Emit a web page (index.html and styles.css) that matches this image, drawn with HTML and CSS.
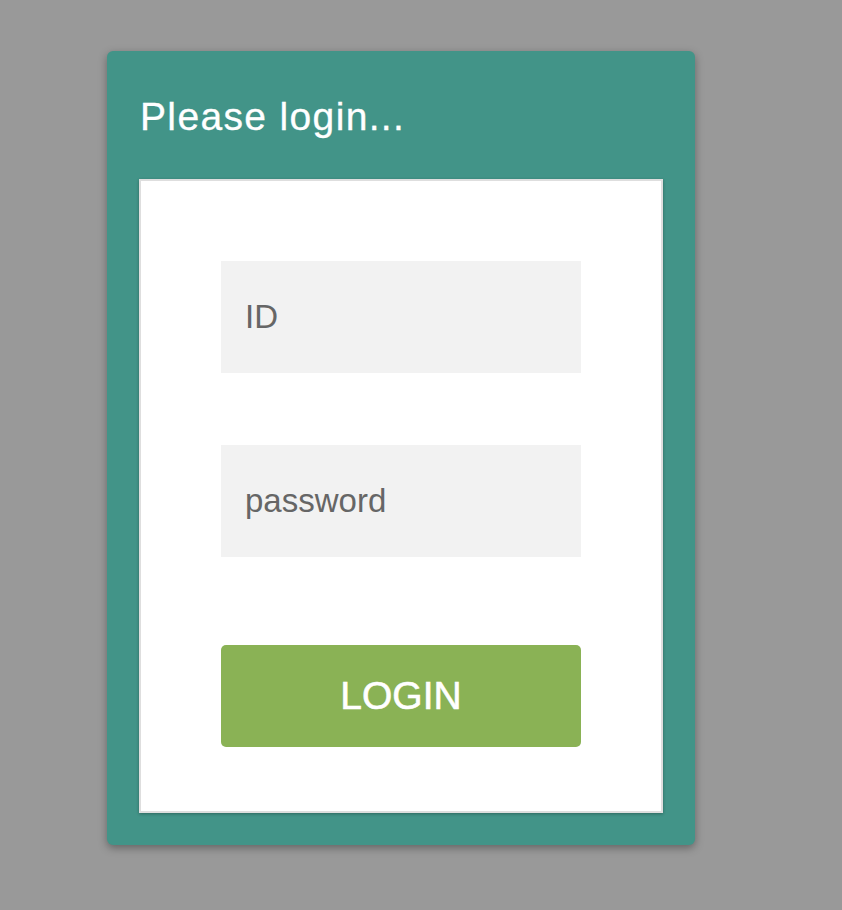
FILE: index.html
```html
<!DOCTYPE html>
<html>
<head>
<meta charset="utf-8">
<link rel="stylesheet" href="styles.css">
</head>
<body>
<div class="card">
  <h1 class="title">Please login...</h1>
  <form class="panel">
    <input class="field" type="text" placeholder="ID">
    <input class="field field-pass" type="password" placeholder="password">
    <button class="btn" type="button">LOGIN</button>
  </form>
</div>
</body>
</html>
```
FILE: styles.css
```css
html, body {
  margin: 0;
  padding: 0;
}
body {
  background: #999999;
  font-family: "Liberation Sans", Arial, sans-serif;
  padding: 51px 0 0 107px;
  height: 910px;
  box-sizing: border-box;
}
.card {
  width: 588px;
  height: 794px;
  box-sizing: border-box;
  background: #429488;
  border-radius: 6px;
  box-shadow: 0 3px 8px rgba(0, 0, 0, 0.35);
  padding: 0 32px 32px;
  display: flex;
  flex-direction: column;
}
.title {
  margin: 0;
  height: 128px;
  box-sizing: border-box;
  padding-top: 41px;
  font-size: 39px;
  line-height: 50px;
  font-weight: normal;
  color: #ffffff;
  padding-left: 1px;
  letter-spacing: 1.35px;
  -webkit-text-stroke: 0.3px #ffffff;
}
.panel {
  margin: 0;
  flex: 1;
  background: #ffffff;
  border: 2px solid #dedede;
  box-shadow: 0 1px 3px rgba(0, 0, 0, 0.3);
  display: flex;
  flex-direction: column;
  align-items: center;
  padding-top: 80px;
}
.field {
  width: 360px;
  height: 112px;
  box-sizing: border-box;
  border: none;
  outline: none;
  background: #f2f2f2;
  padding: 0 0 0 24px;
  font-family: "Liberation Sans", Arial, sans-serif;
  font-size: 33px;
  color: #666666;
  margin: 0;
}
.field::placeholder {
  color: #666666;
  opacity: 1;
}
.field-pass {
  margin-top: 72px;
}
.btn {
  margin-top: 88px;
  width: 360px;
  height: 102px;
  border: none;
  border-radius: 5px;
  background: #8ab255;
  color: #ffffff;
  font-family: "Liberation Sans", Arial, sans-serif;
  font-size: 39px;
  padding: 0;
  -webkit-text-stroke: 0.6px #ffffff;
}
```
